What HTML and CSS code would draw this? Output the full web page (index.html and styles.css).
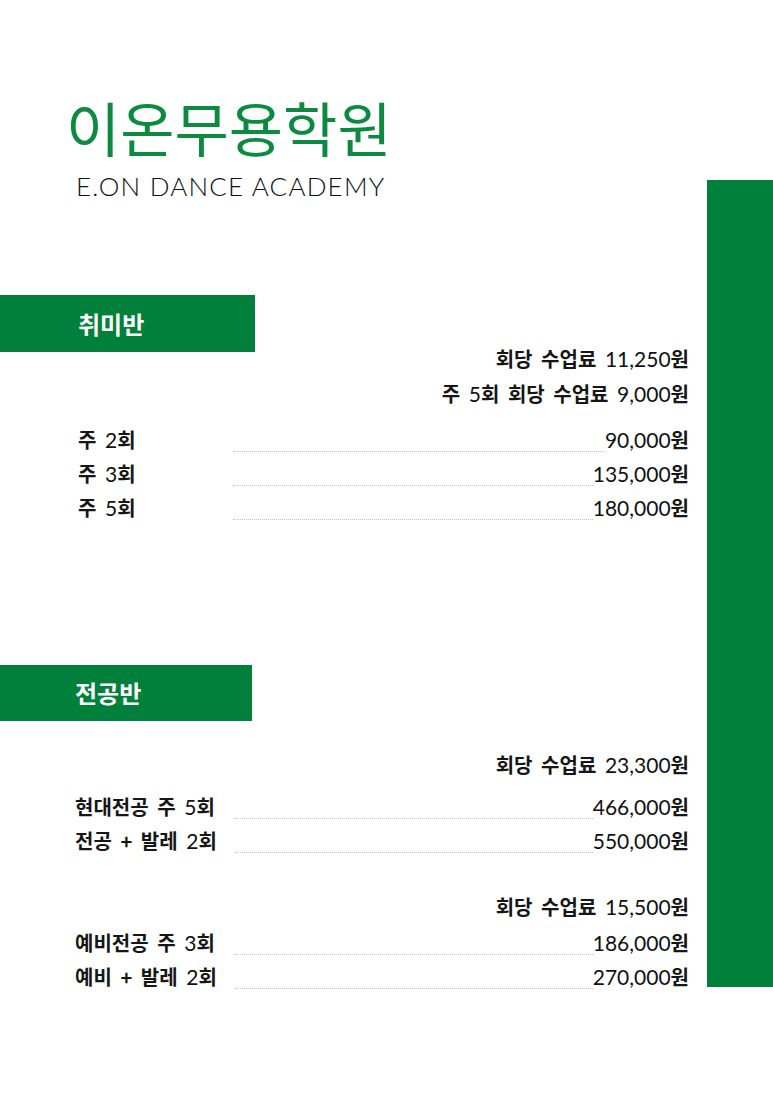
FILE: index.html
```html
<!DOCTYPE html>
<html lang="ko">
<head>
    <meta charset="UTF-8">
    <meta name="viewport" content="width=device-width, initial-scale=1.0">
    <title>이온무용학원</title>
    <link rel="stylesheet" href="styles.css">
</head>
<body>
    <div class="page">
        <div class="content">
            <div class="header">
                <h1 class="title">이온무용학원</h1>
                <p class="subtitle">E.ON DANCE ACADEMY</p>
            </div>

            <div class="section hobby">
                <div class="tag">취미반</div>
                <div class="notes">
                    <p>회당 수업료 <span class="num">11,250</span>원</p>
                    <p>주 <span class="num">5</span>회 회당 수업료 <span class="num">9,000</span>원</p>
                </div>
                <div class="list">
                    <div class="row">
                        <span class="label">주 <span class="num">2</span>회</span>
                        <span class="dots"></span>
                        <span class="price"><span class="num">90,000</span>원</span>
                    </div>
                    <div class="row">
                        <span class="label">주 <span class="num">3</span>회</span>
                        <span class="dots"></span>
                        <span class="price"><span class="num">135,000</span>원</span>
                    </div>
                    <div class="row">
                        <span class="label">주 <span class="num">5</span>회</span>
                        <span class="dots"></span>
                        <span class="price"><span class="num">180,000</span>원</span>
                    </div>
                </div>
            </div>

            <div class="section major">
                <div class="tag">전공반</div>
                <div class="notes">
                    <p>회당 수업료 <span class="num">23,300</span>원</p>
                </div>
                <div class="list">
                    <div class="row">
                        <span class="label">현대전공 주 <span class="num">5</span>회</span>
                        <span class="dots"></span>
                        <span class="price"><span class="num">466,000</span>원</span>
                    </div>
                    <div class="row">
                        <span class="label">전공 + 발레 <span class="num">2</span>회</span>
                        <span class="dots"></span>
                        <span class="price"><span class="num">550,000</span>원</span>
                    </div>
                </div>
                <div class="notes second">
                    <p>회당 수업료 <span class="num">15,500</span>원</p>
                </div>
                <div class="list second">
                    <div class="row">
                        <span class="label">예비전공 주 <span class="num">3</span>회</span>
                        <span class="dots"></span>
                        <span class="price"><span class="num">186,000</span>원</span>
                    </div>
                    <div class="row">
                        <span class="label">예비 + 발레 <span class="num">2</span>회</span>
                        <span class="dots"></span>
                        <span class="price"><span class="num">270,000</span>원</span>
                    </div>
                </div>
            </div>
        </div>
        <div class="bar"></div>
    </div>
</body>
</html>
```

FILE: styles.css
```css
* {
  margin: 0;
  padding: 0;
  box-sizing: border-box;
}

body {
  width: 773px;
  height: 1094px;
  background: #ffffff;
  color: #161616;
  font-family: "Noto Sans CJK KR", "Noto Sans", sans-serif;
  overflow: hidden;
}

.page {
  display: flex;
}

.content {
  width: 707px;
}

.bar {
  width: 66px;
  height: 807px;
  margin-top: 180px;
  background-color: #00803a;
}

/* header */
.header {
  padding: 90px 0 0 66px;
}

.title {
  font-size: 59px;
  font-weight: 400;
  line-height: 74px;
  color: #0b8a40;
}

.subtitle {
  margin: 6px 0 0 10px;
  font-family: Lato, "Open Sans", sans-serif;
  font-size: 26px;
  font-weight: 300;
  letter-spacing: 1.2px;
  line-height: 32px;
  color: #111111;
}

/* sections */
.section {
  padding-right: 18px;
}

.hobby {
  margin-top: 93px;
}

.major {
  margin-top: 141px;
}

.tag {
  width: 255px;
  height: 57px;
  padding-left: 78px;
  background-color: #00803a;
  color: #ffffff;
  font-size: 24px;
  font-weight: 700;
  line-height: 57px;
}

.major .tag {
  width: 252px;
  height: 56px;
  line-height: 56px;
  padding-left: 75px;
}

.notes {
  margin-top: -11px;
  text-align: right;
  font-size: 20px;
  font-weight: 700;
  line-height: 35px;
  word-spacing: 3px;
}

.major .notes {
  margin-top: 26px;
}

.major .notes.second {
  margin-top: 32px;
}

.num {
  font-family: Lato, "Open Sans", sans-serif;
  font-weight: 400;
  font-size: 21px;
  line-height: 1;
  color: #111111;
}

.list {
  margin-top: 11px;
  padding-left: 78px;
}

.major .list {
  margin-top: 7px;
  padding-left: 75px;
}

.major .list.second {
  margin-top: 1px;
}

.row {
  display: flex;
  height: 34px;
  align-items: center;
  font-size: 20px;
  font-weight: 700;
  word-spacing: 3px;
}

.label {
  width: 155px;
  flex-shrink: 0;
  white-space: nowrap;
}

.major .label {
  width: 160px;
}

.dots {
  flex: 1;
  align-self: stretch;
  margin-bottom: 4px;
  border-bottom: 1px dotted #c4c4c4;
}

.price {
  flex-shrink: 0;
  white-space: nowrap;
}
```
